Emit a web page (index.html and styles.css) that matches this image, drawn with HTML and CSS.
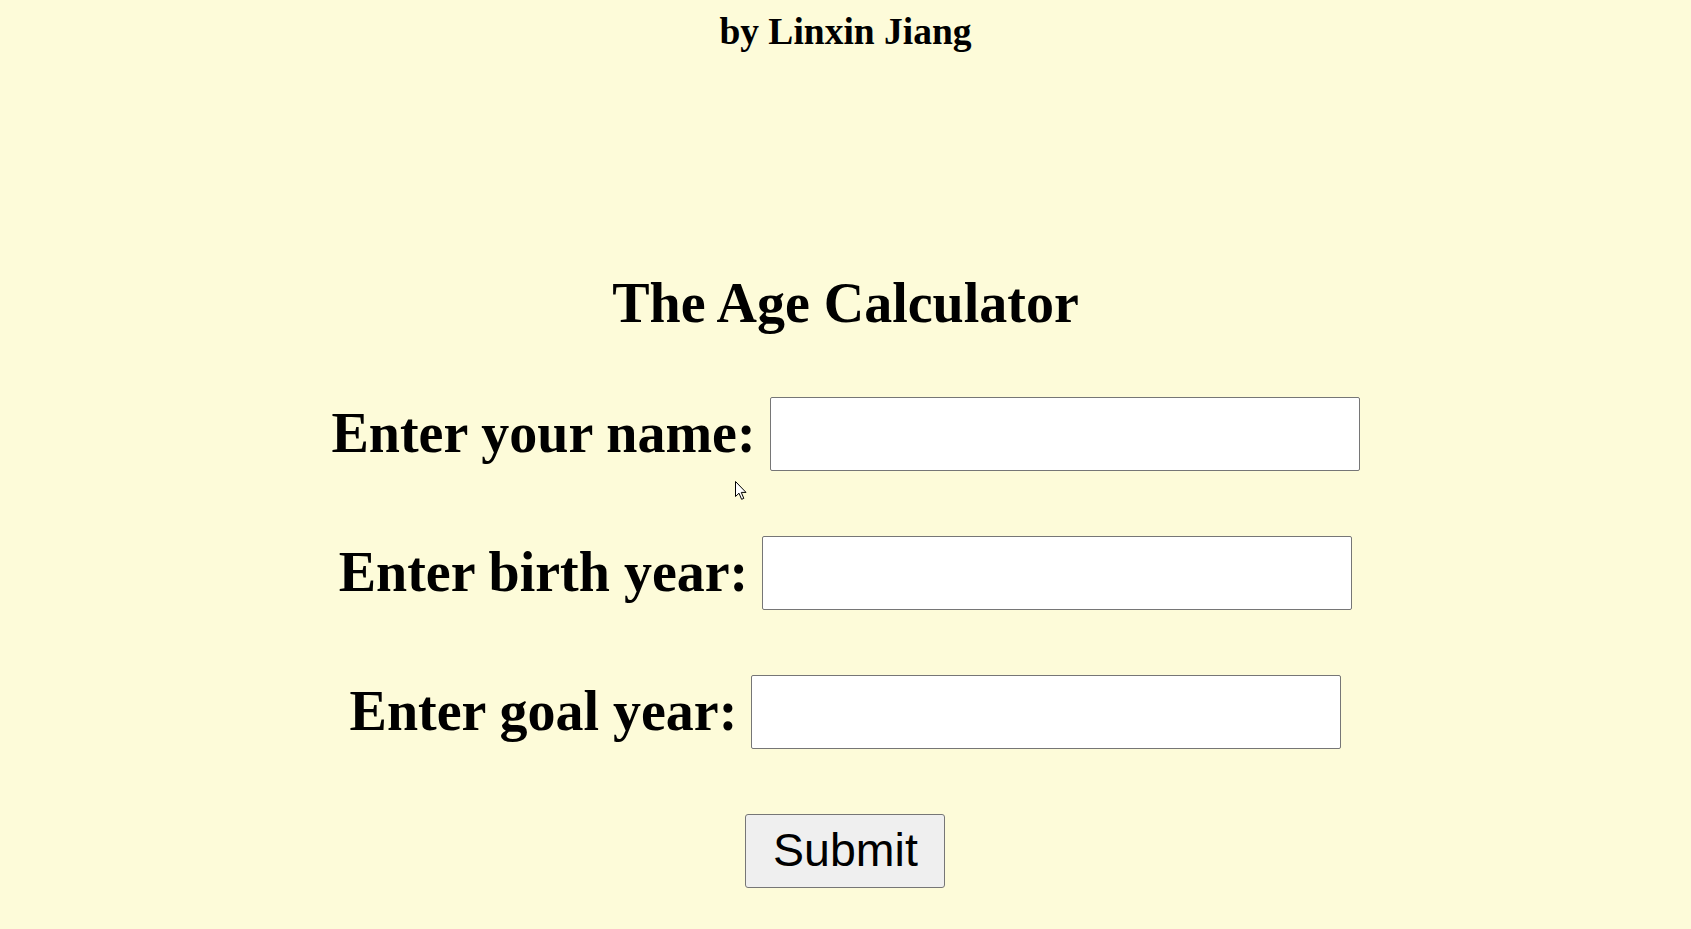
FILE: index.html
```html
<!DOCTYPE html>
<html lang="en">
<head>
<meta charset="utf-8">
<title>The Age Calculator</title>
<link rel="stylesheet" href="styles.css">
</head>
<body>
<div class="page">
  <h3 class="author">by Linxin Jiang</h3>
  <h1 class="title">The Age Calculator</h1>
  <form class="form">
    <div class="row">
      <label class="label" for="name">Enter your name:</label>
      <input class="field" id="name" type="text">
    </div>
    <div class="row">
      <label class="label" for="birth">Enter birth year:</label>
      <input class="field" id="birth" type="text">
    </div>
    <div class="row">
      <label class="label" for="goal">Enter goal year:</label>
      <input class="field" id="goal" type="text">
    </div>
    <div class="row">
      <button class="submit" type="button">Submit</button>
    </div>
  </form>
  <svg class="cursor" width="13" height="20" viewBox="0 0 13 20" aria-hidden="true">
    <path d="M0.5 0.5 L0.5 15.5 L4 12.2 L6.6 18.3 L8.8 17.4 L6.3 11.4 L11 11.4 Z" fill="#ffffff" stroke="#000000" stroke-width="1" stroke-linejoin="miter"/>
  </svg>
</div>
</body>
</html>
```
FILE: styles.css
```css
html, body {
  margin: 0;
  padding: 0;
}

body {
  background: #fdfbd9;
  color: #000;
  font-family: "Liberation Serif", "Times New Roman", serif;
}

.page {
  position: relative;
  min-height: 929px;
  display: flex;
  flex-direction: column;
  align-items: center;
}

.author {
  margin: 13px 0 0;
  font-size: 37.5px;
  line-height: 1;
  font-weight: bold;
}

.title {
  margin: 224px 0 0;
  font-size: 56px;
  line-height: 1;
  font-weight: bold;
}

.form {
  margin-top: 66px;
  display: flex;
  flex-direction: column;
  gap: 65px;
  align-items: center;
}

.row {
  display: flex;
  align-items: center;
  justify-content: center;
  gap: 14px;
}

.label {
  font-size: 56px;
  font-weight: bold;
  line-height: 1;
  position: relative;
  top: -1px;
}

.field {
  box-sizing: border-box;
  width: 590px;
  height: 74px;
  margin: 0;
  padding: 0 8px;
  background: #ffffff;
  border: 1px solid #767676;
  border-radius: 2px;
  font-family: "Liberation Sans", Arial, sans-serif;
  font-size: 40px;
}

.submit {
  box-sizing: border-box;
  width: 200px;
  height: 74px;
  margin: 0;
  padding: 0;
  background: #efefef;
  border: 1px solid #767676;
  border-radius: 3px;
  color: #000;
  font-family: "Liberation Sans", Arial, sans-serif;
  font-size: 46.5px;
  line-height: 1;
}

.cursor {
  position: absolute;
  left: 735px;
  top: 481px;
}
```
